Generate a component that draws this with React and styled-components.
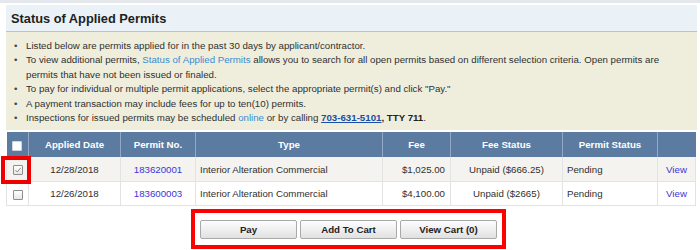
import React from "react";
import styled, { createGlobalStyle } from "styled-components";

const Global = createGlobalStyle`
  html, body { margin: 0; padding: 0; background: #ffffff; }
  body { font-family: "Liberation Sans", Arial, sans-serif; color: #333; }
`;

const Page = styled.div`
  width: 700px;
  height: 250px;
  box-sizing: border-box;
  border-top: 3px solid #e4e8ec;
  padding: 2px 3px 0 6px;
  overflow: hidden;
`;

const Panel = styled.section`
  display: flex;
  flex-direction: column;
`;

const Header = styled.div`
  height: 26px;
  background: #eaf1f7;
  border-bottom: 1px solid #bcc2c8;
  display: flex;
  align-items: center;
  padding-left: 5px;
`;

const Title = styled.h2`
  margin: 0;
  padding-top: 1px;
  font-size: 12.8px;
  font-weight: bold;
  color: #1e1e1e;
`;

const Info = styled.ul`
  margin: 0;
  list-style: none;
  background: #efeedd;
  padding: 7px 15px 5px 20px;
  font-size: 9.7px;
  line-height: 14.4px;
  color: #303030;
`;

const Item = styled.li`
  position: relative;
  &::before {
    content: "•";
    position: absolute;
    left: -12px;
    color: #444;
  }
`;

const SoftLink = styled.a`
  color: #3b8bd0;
  text-decoration: none;
`;

const Phone = styled.a`
  color: #1a4ea6;
  font-weight: bold;
  text-decoration: underline;
`;

const Strong = styled.b`
  color: #222;
`;

const Table = styled.table`
  margin-top: 2px;
  width: 689px;
  border-collapse: collapse;
  table-layout: fixed;
  font-size: 9.7px;
  color: #303030;
`;

const Th = styled.th`
  height: 25px;
  padding: 0;
  background: #5b7ba0;
  color: #ffffff;
  font-weight: bold;
  text-align: center;
  border-left: 1px solid #93a9c3;
  &:first-child { border-left: none; }
`;

const Tr = styled.tr`
  background: ${(p) => (p.$shaded ? "#f4f3ef" : "#ffffff")};
`;

const Td = styled.td`
  height: ${(p) => p.$h || 23}px;
  padding: 0 ${(p) => (p.$align === "right" ? "5px" : "4px")};
  text-align: ${(p) => p.$align || "left"};
  border: 1px solid #e3e3e3;
  border-top: none;
  white-space: nowrap;
  position: relative;
`;

const CellLink = styled.a`
  color: #3a36d8;
  text-decoration: none;
`;

const Box = styled.span`
  display: inline-block;
  width: 10px;
  height: 10px;
  box-sizing: border-box;
  border: 1px solid ${(p) => (p.$white ? "#d0d6de" : "#8d8d8d")};
  background: ${(p) => (p.$white ? "#ffffff" : "linear-gradient(#ffffff, #e6e6e6)")};
  border-radius: 1px;
  vertical-align: middle;
  position: relative;
  svg { position: absolute; left: 0; top: 0; }
`;

const Highlight = styled.span`
  position: absolute;
  left: -6px;
  top: -1px;
  right: -3px;
  bottom: -3px;
  border: 4px solid #ee0000;
  pointer-events: none;
`;

const ButtonBar = styled.div`
  align-self: center;
  margin-top: 3px;
  margin-left: -6px;
  display: flex;
  gap: 3px;
  padding: 7px 5px 6px 5px;
  border: 4px solid #ff0000;
`;

const Button = styled.button`
  width: 97px;
  height: 19px;
  padding: 0;
  border: 1px solid #a9a9a9;
  border-radius: 2px;
  background: linear-gradient(#fdfdfd, #e1e1e1);
  font-family: "Liberation Sans", Arial, sans-serif;
  font-size: 9.7px;
  font-weight: bold;
  color: #222;
`;

const rows = [
  { date: "12/28/2018", no: "183620001", type: "Interior Alteration Commercial", fee: "$1,025.00", status: "Unpaid ($666.25)", permit: "Pending", checked: true },
  { date: "12/26/2018", no: "183600003", type: "Interior Alteration Commercial", fee: "$4,100.00", status: "Unpaid ($2665)", permit: "Pending", checked: false },
];

const Check = () => (
  <svg width="8" height="8" viewBox="0 0 8 8">
    <path d="M1.5 4.2 L3.3 6 L6.8 1.8" fill="none" stroke="#8a8a8a" strokeWidth="1" />
  </svg>
);

export default function App() {
  return (
    <>
      <Global />
      <Page>
        <Panel>
          <Header>
            <Title>Status of Applied Permits</Title>
          </Header>
          <Info>
            <Item>Listed below are permits applied for in the past 30 days by applicant/contractor.</Item>
            <Item>
              To view additional permits, <SoftLink>Status of Applied Permits</SoftLink> allows you to search for all open permits based on different selection criteria. Open permits are permits that have not been issued or finaled.
            </Item>
            <Item>To pay for individual or multiple permit applications, select the appropriate permit(s) and click "Pay."</Item>
            <Item>A payment transaction may include fees for up to ten(10) permits.</Item>
            <Item>
              Inspections for issued permits may be scheduled <SoftLink>online</SoftLink> or by calling <Phone>703-631-5101</Phone><Strong>, TTY 711</Strong>.
            </Item>
          </Info>
          <Table>
            <colgroup>
              <col style={{ width: 22 }} />
              <col style={{ width: 92 }} />
              <col style={{ width: 75 }} />
              <col style={{ width: 187 }} />
              <col style={{ width: 68 }} />
              <col style={{ width: 112 }} />
              <col style={{ width: 95 }} />
              <col style={{ width: 38 }} />
            </colgroup>
            <thead>
              <tr>
                <Th><Box $white /></Th>
                <Th>Applied Date</Th>
                <Th>Permit No.</Th>
                <Th>Type</Th>
                <Th>Fee</Th>
                <Th>Fee Status</Th>
                <Th>Permit Status</Th>
                <Th />
              </tr>
            </thead>
            <tbody>
              {rows.map((r, i) => (
                <Tr key={r.no} $shaded={i === 0}>
                  <Td $align="center" $h={i === 0 ? 24 : 23}>
                    <Box>{r.checked && <Check />}</Box>
                    {r.checked && <Highlight />}
                  </Td>
                  <Td $align="center">{r.date}</Td>
                  <Td $align="center"><CellLink>{r.no}</CellLink></Td>
                  <Td>{r.type}</Td>
                  <Td $align="right">{r.fee}</Td>
                  <Td $align="center">{r.status}</Td>
                  <Td>{r.permit}</Td>
                  <Td $align="center"><CellLink>View</CellLink></Td>
                </Tr>
              ))}
            </tbody>
          </Table>
          <ButtonBar>
            <Button>Pay</Button>
            <Button>Add To Cart</Button>
            <Button>View Cart (0)</Button>
          </ButtonBar>
        </Panel>
      </Page>
    </>
  );
}
